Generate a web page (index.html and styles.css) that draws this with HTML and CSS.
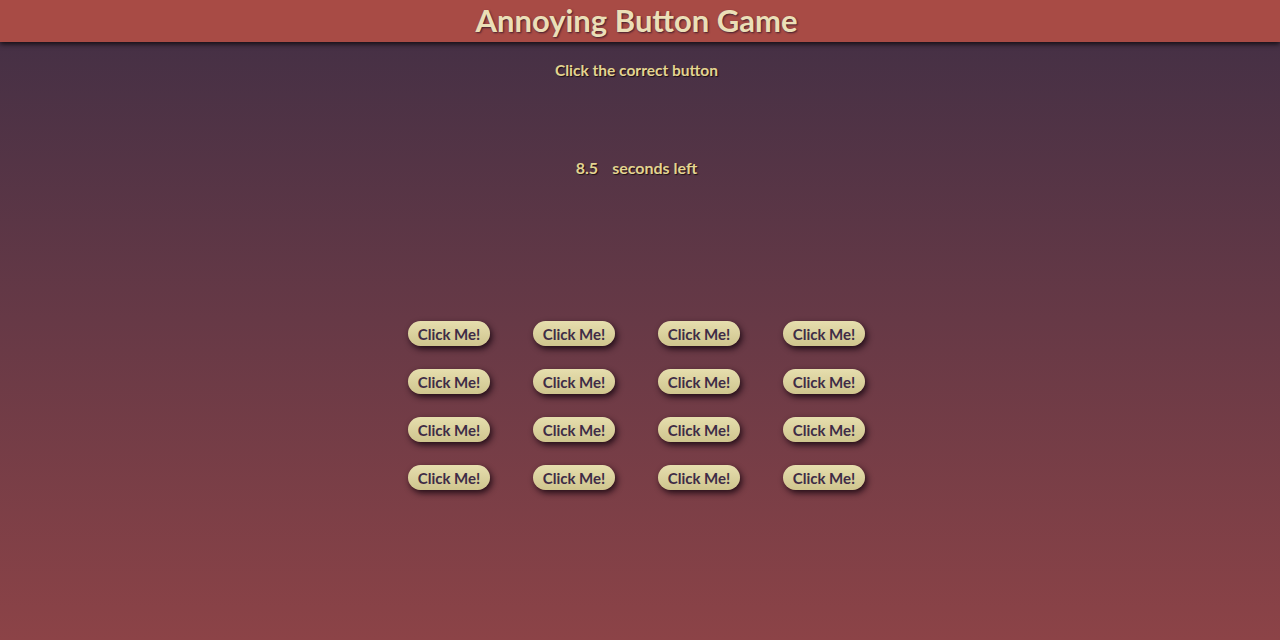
FILE: index.html
```html
<!DOCTYPE html>
<html>
<head>
<meta charset="utf-8">
<link rel="stylesheet" href="styles.css">
</head>
<body>
<header class="topbar"><h1 class="title">Annoying Button Game</h1></header>
<main class="main">
  <p class="hint">Click the correct button</p>
  <p class="timer"><span class="time">8.5</span><span class="label">seconds left</span></p>
  <div class="grid">
    <button class="btn">Click Me!</button><button class="btn">Click Me!</button><button class="btn">Click Me!</button><button class="btn">Click Me!</button>
    <button class="btn">Click Me!</button><button class="btn">Click Me!</button><button class="btn">Click Me!</button><button class="btn">Click Me!</button>
    <button class="btn">Click Me!</button><button class="btn">Click Me!</button><button class="btn">Click Me!</button><button class="btn">Click Me!</button>
    <button class="btn">Click Me!</button><button class="btn">Click Me!</button><button class="btn">Click Me!</button><button class="btn">Click Me!</button>
  </div>
</main>
</body>
</html>
```
FILE: styles.css
```css
html, body {
  margin: 0;
  height: 100%;
}
body {
  background: linear-gradient(to bottom, #412f45 0%, #8c4347 100%);
  font-family: Lato, "Open Sans", sans-serif;
  color: #e6d99f;
  overflow: hidden;
}
.topbar {
  height: 42px;
  background: #a84b45;
  box-shadow: 0 2px 5px rgba(0,0,0,0.75);
  display: flex;
  justify-content: center;
  align-items: center;
  padding-right: 7px;
  padding-bottom: 3px;
  box-sizing: border-box;
  position: relative;
}
.title {
  margin: 0;
  font-size: 31px;
  font-weight: 700;
  color: #ebdfb7;
  text-shadow: 1px 1px 2px rgba(40,20,40,0.8);
}
.main {
  display: flex;
  flex-direction: column;
  align-items: center;
  padding-right: 7px;
}
.hint {
  margin: 19px 0 0;
  font-size: 15.5px;
  font-weight: 700;
  color: #e3d490;
  text-shadow: 1px 1px 1px rgba(20,10,20,0.9);
}
.timer {
  margin: 79px 0 0;
  font-size: 16px;
  font-weight: 700;
  color: #e3d490;
  text-shadow: 1px 1px 1px rgba(20,10,20,0.9);
  display: flex;
  gap: 14px;
}
.grid {
  margin-top: 144px;
  display: grid;
  grid-template-columns: repeat(4, 82px);
  column-gap: 43px;
  row-gap: 23px;
}
.btn {
  width: 82px;
  height: 25px;
  border: none;
  border-radius: 13px;
  background: linear-gradient(to bottom, #e6deae, #cfc58e);
  box-shadow: 2px 3px 6px rgba(20,5,15,0.85);
  font-family: Lato, "Open Sans", sans-serif;
  font-weight: 700;
  font-size: 15px;
  color: #3e2c46;
  padding: 0;
}
```
